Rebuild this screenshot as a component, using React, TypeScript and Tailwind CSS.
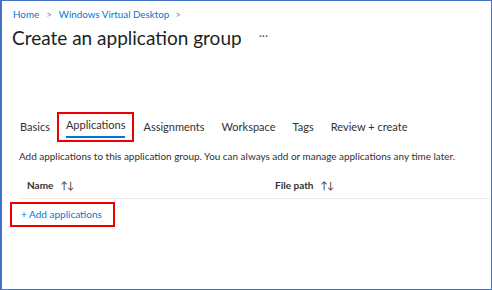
import React from "react";

const tabs = ["Basics", "Applications", "Assignments", "Workspace", "Tags", "Review + create"];

function SortIcon() {
  return <span className="ml-[7px] text-[10px] tracking-[-1px] font-normal">↑↓</span>;
}

export default function App() {
  return (
    <div
      className="w-[492px] h-[290px] bg-white border-l-2 border-t border-r border-b border-[#4472c4] text-[#323130] overflow-hidden whitespace-nowrap"
      style={{ fontFamily: 'Lato, "Noto Sans", sans-serif' }}
    >
      <div className="pl-[11px] pt-[6px] flex items-center text-[9.8px] text-[#0078d4]">
        <span>Home</span>
        <span className="mx-[7px] text-[#8a8886]">&gt;</span>
        <span>Windows Virtual Desktop</span>
        <span className="ml-[6px] text-[#8a8886]">&gt;</span>
      </div>
      <div className="pl-[10px] mt-[3px] flex items-center">
        <h1 className="text-[19px] leading-[26px] font-normal text-[#201f1e]">Create an application group</h1>
        <span className="ml-[17px] text-[12px] text-[#605e5c] -mt-[4px]">···</span>
      </div>

      <div className="mt-[61px] pl-[16px] flex items-center text-[11px] text-[#323130]">
        {tabs.map((t) =>
          t === "Applications" ? (
            <div
              key={t}
              className="border-2 border-[#e00] ml-[7px] mr-[9px] px-[7px] pt-[3px] pb-[2px] flex flex-col"
            >
              <span className="leading-[16px]">{t}</span>
              <span className="mt-[3px] h-[2px] bg-[#0078d4]" />
            </div>
          ) : (
            <span key={t} className="mr-[17px] first:ml-[2px] first:mr-0 leading-[16px]">
              {t}
            </span>
          )
        )}
      </div>

      <p className="mt-[7px] pl-[17px] text-[9.95px] text-[#323130]">
        Add applications to this application group. You can always add or manage applications any time later.
      </p>

      <div className="ml-[17px] mt-[9px] flex items-center h-[26px] border-b border-[#edebe9] text-[10px] font-bold">
        <div className="w-[256px] pl-[8px] flex items-center">
          Name
          <SortIcon />
        </div>
        <div className="flex items-center">
          File path
          <SortIcon />
        </div>
      </div>

      <div className="ml-[8px] mt-[3px] w-[105px] h-[25px] border-2 border-[#e00] flex items-center pl-[9px] text-[10px] text-[#0078d4]">
        + Add applications
      </div>
    </div>
  );
}
